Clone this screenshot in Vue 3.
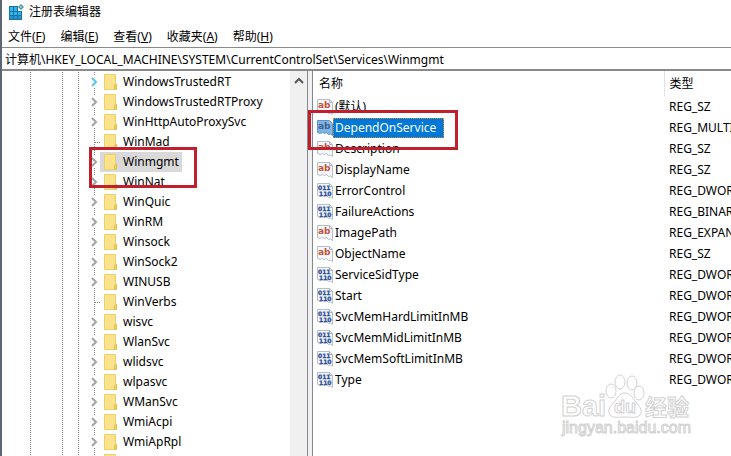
<template>
  <div class="window">
    <header class="title-bar">
      <svg class="app-icon" viewBox="0 0 16 16" aria-hidden="true">
        <path d="M1 2h13v14H1z" fill="#1673a8" />
        <path d="M2 3h3v4H2zM6 3h3v4H6zM2 8h3v3H2zM6 8h3v3H6zM10 8h3v3h-3z" fill="#35b4e6" />
        <path d="M2 12h3v3H2zM6 12h3v3H6zM10 12h3v3h-3z" fill="#2a93cc" />
        <path d="M10 0h6v7h-6z" fill="#fff" />
        <path d="M13 0l3 3-3 3-3-3z" fill="#4f8f96" />
        <path d="M13 1.500l1.500 1.500-1.500 1.500-1.500-1.500z" fill="#8fd0d2" />
      </svg>
      <h1>注册表编辑器</h1>
    </header>

    <nav class="menu-bar">
      <button v-for="menu in menus" :key="menu.key" type="button">
        {{ menu.label }}(<u>{{ menu.key }}</u>)
      </button>
    </nav>

    <input v-model="path" class="address" type="text" aria-label="地址" spellcheck="false" />

    <main class="panes">
      <section class="tree-pane">
        <ul class="tree">
          <li v-for="node in nodes" :key="node.name" class="node">
            <span class="guide wide"></span>
            <span class="guide"></span>
            <span class="guide"></span>
            <span class="guide branch" :class="{ leaf: node.leaf }">
              <svg v-if="!node.leaf" class="chevron" :class="{ hot: node.hot }" viewBox="0 0 8 12" aria-hidden="true">
                <path d="M2 2l4 4-4 4" />
              </svg>
            </span>
            <button
              type="button"
              :class="['key', { active: activeKey === node.name }]"
              @click="activeKey = node.name"
            >
              <svg class="folder" viewBox="0 0 14 16" aria-hidden="true">
                <path d="M.5 .5h11v10l1 1v4H.5z" fill="#fbe38c" stroke="#ecd06c" />
                <path d="M10.500 15v-3.500l2-1.500v5z" fill="#f4d263" stroke="#d9b548" stroke-width=".7" />
              </svg>
              <span>{{ node.name }}</span>
            </button>
          </li>
        </ul>
        <div class="scrollbar">
          <svg viewBox="0 0 10 8" aria-hidden="true"><path d="M1 6l4-4 4 4" /></svg>
        </div>
        <div class="mark mark-tree"></div>
      </section>

      <section class="value-pane">
        <table>
          <thead>
            <tr>
              <th class="name-col">名称</th>
              <th class="type">类型</th>
            </tr>
          </thead>
          <tbody>
            <tr v-for="value in values" :key="value.name" @click="activeValue = value.name">
              <td>
                <div :class="['value', { active: activeValue === value.name }]">
                  <svg class="value-icon" viewBox="0 0 16 16" aria-hidden="true">
                    <path
                      class="sheet"
                      d="M.5 .5h12l3 3v12l-2-1.500-2 .5-2-2-2 1-2-1-2.500 1-2-1H.5z"
                    />
                    <path class="fold" d="M12.500 .5v3h3" />
                    <text v-if="isText(value.type)" class="ab" x="1" y="9">ab</text>
                    <template v-else>
                      <text class="bits" x="1" y="7">011</text>
                      <text class="bits" x="2" y="13">110</text>
                    </template>
                  </svg>
                  <span>{{ value.name }}</span>
                </div>
              </td>
              <td class="type">{{ value.type }}</td>
            </tr>
          </tbody>
        </table>
        <div class="mark mark-value"></div>
      </section>
    </main>

    <svg class="watermark" viewBox="0 0 136 68" aria-hidden="true">
      <text x="0" y="40" class="brand">Bai</text>
      <ellipse cx="50" cy="15" rx="5" ry="7" />
      <ellipse cx="59" cy="6" rx="5" ry="7" />
      <ellipse cx="71" cy="7" rx="5" ry="7" />
      <ellipse cx="78" cy="17" rx="5" ry="7" />
      <path d="M64 17c5 0 7 4 10 8s7 7 6 12c-2 6-9 4-16 4s-14 2-16-4c-1-5 3-8 6-12s5-8 10-8z" />
      <text x="53" y="37" class="du">du</text>
      <text x="84" y="39" class="cn">经验</text>
      <text x="1" y="57" class="site">jingyan.baidu.com</text>
    </svg>
  </div>
</template>

<script setup>
import { ref } from 'vue'

const path = ref('计算机\\HKEY_LOCAL_MACHINE\\SYSTEM\\CurrentControlSet\\Services\\Winmgmt')
const activeKey = ref('Winmgmt')
const activeValue = ref('DependOnService')

const menus = [
  { label: '文件', key: 'F' },
  { label: '编辑', key: 'E' },
  { label: '查看', key: 'V' },
  { label: '收藏夹', key: 'A' },
  { label: '帮助', key: 'H' },
]

const nodes = [
  { name: 'WindowsTrustedRT', hot: true },
  { name: 'WindowsTrustedRTProxy' },
  { name: 'WinHttpAutoProxySvc' },
  { name: 'WinMad', leaf: true },
  { name: 'Winmgmt' },
  { name: 'WinNat' },
  { name: 'WinQuic' },
  { name: 'WinRM' },
  { name: 'Winsock' },
  { name: 'WinSock2' },
  { name: 'WINUSB' },
  { name: 'WinVerbs', leaf: true },
  { name: 'wisvc' },
  { name: 'WlanSvc' },
  { name: 'wlidsvc' },
  { name: 'wlpasvc' },
  { name: 'WManSvc' },
  { name: 'WmiAcpi' },
  { name: 'WmiApRpl' },
  { name: '', leaf: true },
]

const values = [
  { name: '(默认)', type: 'REG_SZ' },
  { name: 'DependOnService', type: 'REG_MULTI_SZ' },
  { name: 'Description', type: 'REG_SZ' },
  { name: 'DisplayName', type: 'REG_SZ' },
  { name: 'ErrorControl', type: 'REG_DWORD' },
  { name: 'FailureActions', type: 'REG_BINARY' },
  { name: 'ImagePath', type: 'REG_EXPAND_SZ' },
  { name: 'ObjectName', type: 'REG_SZ' },
  { name: 'ServiceSidType', type: 'REG_DWORD' },
  { name: 'Start', type: 'REG_DWORD' },
  { name: 'SvcMemHardLimitInMB', type: 'REG_DWORD' },
  { name: 'SvcMemMidLimitInMB', type: 'REG_DWORD' },
  { name: 'SvcMemSoftLimitInMB', type: 'REG_DWORD' },
  { name: 'Type', type: 'REG_DWORD' },
]

const isText = (type) => type.endsWith('_SZ')
</script>

<style>
body {
  margin: 0;
  overflow: hidden;
}
</style>

<style scoped>
.window {
  position: relative;
  display: flex;
  flex-direction: column;
  box-sizing: border-box;
  height: 100vh;
  overflow: hidden;
  border-left: 2px solid #5d6675;
  background: #fff;
  color: #000;
  font-family: 'Noto Sans', 'Noto Sans CJK SC', sans-serif;
  font-size: 12px;
  line-height: 20px;
}

button,
input {
  margin: 0;
  border: none;
  background: transparent;
  color: inherit;
  font: inherit;
}

.title-bar {
  display: flex;
  align-items: center;
  gap: 5px;
  height: 24px;
  padding-left: 6px;
}

.title-bar h1 {
  margin: 0;
  font-size: 12px;
  font-weight: 400;
}

.app-icon {
  width: 16px;
  height: 16px;
}

.menu-bar {
  display: flex;
  gap: 15px;
  height: 23px;
  padding-left: 6px;
}

.menu-bar button {
  padding: 2px 0 0;
  white-space: nowrap;
}

.address {
  flex: none;
  box-sizing: border-box;
  height: 24px;
  padding: 0 3px;
  border-top: 1px solid #8a8a8a;
  border-bottom: 2px solid #8a8a8a;
  outline: none;
}

.panes {
  display: flex;
  flex: 1;
  min-height: 0;
  background: #f0f0f0;
}

/* Árbol de claves */
.tree-pane {
  position: relative;
  display: flex;
  flex: none;
  width: 305px;
  border-right: 1px solid #85888e;
}

.tree {
  flex: 1;
  margin: 0;
  padding: 1px 0 0 28px;
  overflow: hidden;
  background: #fff;
  list-style: none;
}

.node {
  display: flex;
  height: 20px;
}

.guide {
  position: relative;
  flex: none;
  width: 16px;
  background: repeating-linear-gradient(#858585 0 1px, #fff 1px 2px) left / 1px 100% no-repeat;
}

.guide.wide {
  width: 32px;
}

.guide.branch {
  width: 6px;
}

.guide.leaf::after {
  content: '';
  position: absolute;
  top: 10px;
  left: 0;
  width: 6px;
  border-top: 1px dotted #858585;
}

.chevron {
  position: absolute;
  top: 4px;
  left: -4px;
  width: 8px;
  height: 12px;
  background: #fff;
  fill: none;
  stroke: #a3a3a3;
  stroke-width: 2;
}

.chevron.hot {
  stroke: #5bc5ea;
}

.key {
  display: flex;
  align-items: center;
  gap: 5px;
  height: 20px;
  padding: 0 3px 0 4px;
}

.key.active {
  background: #d9d9d9;
}

.folder {
  width: 14px;
  height: 16px;
}

.scrollbar {
  flex: none;
  width: 17px;
  background: #f0f0f0;
  text-align: center;
}

.scrollbar svg {
  width: 10px;
  height: 8px;
  fill: none;
  stroke: #555;
  stroke-width: 2;
}

/* Lista de valores */
.value-pane {
  position: relative;
  flex: 1;
  min-width: 0;
  margin-left: 4px;
  border-left: 1px solid #85888e;
  background: #fff;
}

table {
  width: 100%;
  border-collapse: collapse;
  table-layout: fixed;
}

th,
td {
  height: 21px;
  padding: 0;
  overflow: hidden;
  text-align: left;
  white-space: nowrap;
}

th {
  height: 25px;
  padding-left: 6px;
  font-weight: 400;
}

.name-col {
  box-sizing: border-box;
  width: 351px;
  border-right: 1px solid #e2e2e2;
}

.type {
  padding-left: 5px;
}

.value {
  display: flex;
  align-items: center;
  padding-left: 4px;
}

.value span {
  padding: 0 5px 0 2px;
}

.value.active span {
  padding-right: 8px;
  outline: 1px dotted #d98a3a;
  outline-offset: -1px;
  background: #0078d7;
  color: #fff;
}

.value-icon {
  flex: none;
  width: 16px;
  height: 16px;
}

.sheet {
  fill: #f5f7fa;
  stroke: #b4bec8;
}

.fold {
  fill: none;
  stroke: #a9b4bf;
}

.ab,
.bits {
  font-family: 'DejaVu Sans', sans-serif;
  font-weight: 700;
}

.ab {
  fill: #c4513a;
  font-size: 9px;
}

.bits {
  fill: #2b4f96;
  font-size: 6px;
  stroke: #2b4f96;
  stroke-width: 0.3;
}

.value.active .sheet {
  fill: #7fb4e2;
  stroke: #5a95cc;
}

.value.active .ab {
  fill: #3f5f94;
}

/* Recuadros rojos sobre la clave y el valor */
.mark {
  position: absolute;
  box-sizing: border-box;
  border: 3px solid #c01f2e;
  pointer-events: none;
}

.mark-tree {
  top: 76px;
  left: 87px;
  width: 108px;
  height: 41px;
}

.mark-value {
  top: 39px;
  left: -5px;
  width: 150px;
  height: 40px;
}

.watermark {
  position: absolute;
  right: 34px;
  bottom: 12px;
  width: 136px;
  height: 68px;
  overflow: visible;
  fill: #fff;
  stroke: #d2d2d2;
  stroke-width: 1;
  font-family: 'Liberation Sans', 'Noto Sans CJK SC', sans-serif;
  font-weight: 700;
  pointer-events: none;
}

.brand {
  font-size: 29px;
}

.du {
  font-size: 18px;
}

.cn {
  font-size: 22px;
}

.site {
  font-size: 16px;
  font-weight: 400;
}
</style>
